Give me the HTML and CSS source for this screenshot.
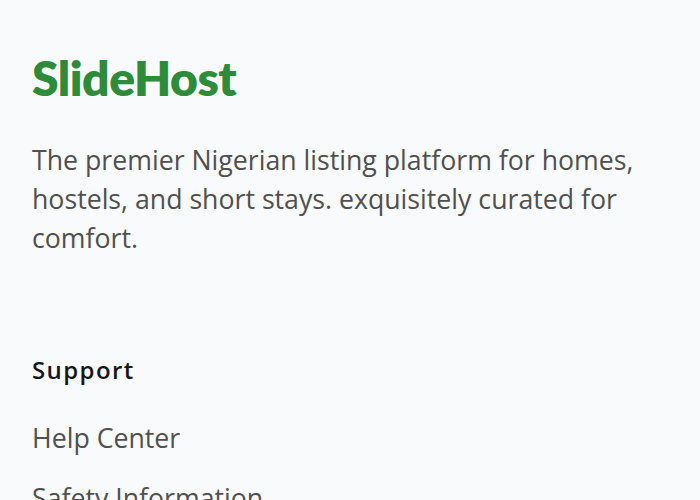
FILE: index.html
```html
<!DOCTYPE html>
<html lang="en">
<head>
    <meta charset="UTF-8">
    <meta name="viewport" content="width=device-width, initial-scale=1.0">
    <title>SlideHost</title>
    <link rel="stylesheet" href="styles.css">
</head>
<body>
    <footer class="footer">
        <div class="brand">
            <h2 class="logo">SlideHost</h2>
            <p class="tagline">The premier Nigerian listing platform for homes, hostels, and short stays. exquisitely curated for comfort.</p>
        </div>

        <div class="links">
            <h3>Support</h3>
            <ul>
                <li><a href="#">Help Center</a></li>
                <li><a href="#">Safety Information</a></li>
                <li><a href="#">Cancellation Options</a></li>
            </ul>
        </div>
    </footer>
</body>
</html>
```

FILE: styles.css
```css
body {
    margin: 0;
    background-color: #f9fafc;
    font-family: "Open Sans", "Lato", sans-serif;
}

.footer {
    padding: 52px 32px 40px;
}

.logo {
    margin: 0;
    font-family: "Lato", sans-serif;
    font-size: 48px;
    font-weight: 800;
    line-height: 52px;
    color: #2e8b3a;
    letter-spacing: -0.5px;
}

.tagline {
    margin: 36px 0 0;
    max-width: 636px;
    font-size: 26.7px;
    font-weight: 400;
    line-height: 39px;
    color: #505050;
}

.links {
    margin-top: 96px;
}

.links h3 {
    margin: 0;
    font-size: 24px;
    font-weight: 600;
    line-height: 33px;
    letter-spacing: 1.4px;
    color: #161616;
}

.links ul {
    list-style: none;
    margin: 35px 0 0;
    padding: 0;
    display: flex;
    flex-direction: column;
    gap: 26px;
}

.links a {
    display: block;
    font-size: 26.7px;
    line-height: 34px;
    color: #505050;
    text-decoration: none;
}
```
